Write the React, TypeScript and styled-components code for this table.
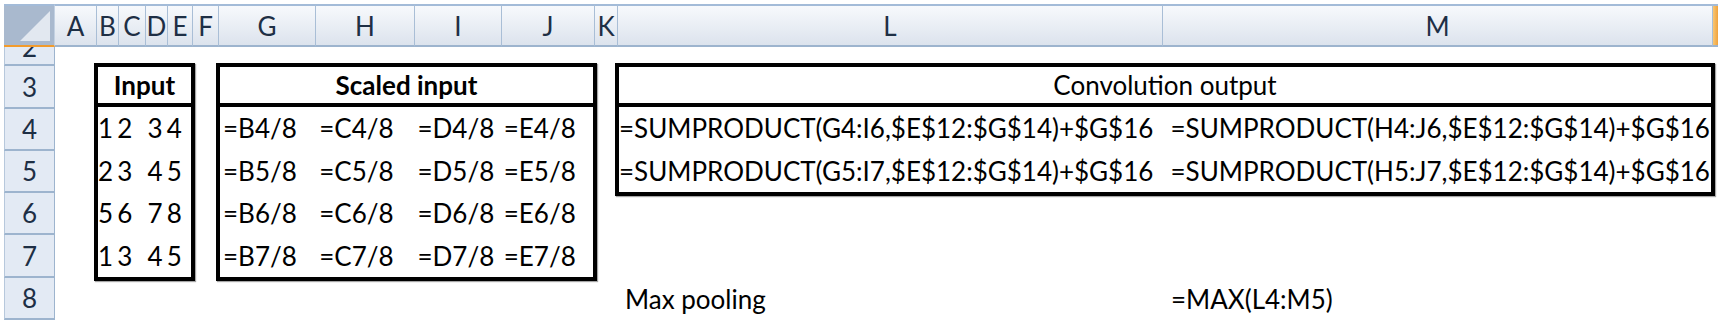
import styled, { createGlobalStyle } from 'styled-components';

const GlobalStyle = createGlobalStyle`
  body {
    margin: 0;
    background: #ffffff;
  }
`;

const COLUMNS = ['A', 'B', 'C', 'D', 'E', 'F', 'G', 'H', 'I', 'J', 'K', 'L', 'M'];
const ROWS = ['3', '4', '5', '6', '7', '8'];

const INPUT = [
  ['1', '2', '3', '4'],
  ['2', '3', '4', '5'],
  ['5', '6', '7', '8'],
  ['1', '3', '4', '5'],
];
// digits in the input box do not sit evenly in their cells
const INPUT_SHIFT = [0, -2, 2, 0];

const Sheet = styled.div`
  display: grid;
  grid-template-columns: 51px 42px 22px 27px 22px 25px 26px 97px 99px 87px 93px 23px 545px 550px 5px;
  grid-template-rows: 43px 19px 43px 42px 42px 42px 43px 42px 6px;
  padding: 4px 0 0 4px;
  font-family: Lato, 'Open Sans', sans-serif;
  font-size: 26px;
  color: #000;
`;

const Corner = styled.div`
  grid-column: 1;
  grid-row: 1;
  position: relative;
  background: #a9b9ce;
  border-top: 2px solid #a3bbd8;
  border-right: 1px solid #c3d1e2;
  border-bottom: 2px solid #f29b2c;
  svg {
    position: absolute;
    right: 4px;
    bottom: 4px;
  }
`;

const ColHead = styled.div<{ $col: number }>`
  grid-column: ${(p) => p.$col};
  grid-row: 1;
  display: flex;
  align-items: center;
  justify-content: center;
  background: linear-gradient(#f7f9fc, #dce3ed);
  border-top: 2px solid #a3bbd8;
  border-right: 1px solid #a9bed6;
  border-bottom: 2px solid #9db4ce;
  color: #1e2f45;
  font-size: 26px;
`;

const EdgeHead = styled.div`
  grid-column: 15;
  grid-row: 1;
  background: linear-gradient(90deg, #f8c775, #f0a23c);
  border-top: 2px solid #a3bbd8;
  border-bottom: 2px solid #9db4ce;
`;

const RowHead = styled.div<{ $row: number; $clip?: boolean }>`
  grid-column: 1;
  grid-row: ${(p) => p.$row};
  display: flex;
  align-items: ${(p) => (p.$clip ? 'flex-end' : 'center')};
  justify-content: center;
  overflow: hidden;
  background: #e3eaf4;
  border-left: 1px solid #b7c8dc;
  border-right: 1px solid #9db4ce;
  border-bottom: 2px solid #9db4ce;
  color: #1e2f45;
  span {
    line-height: ${(p) => (p.$clip ? '42px' : 'normal')};
    margin-bottom: ${(p) => (p.$clip ? '-4px' : '0')};
  }
`;

const Box = styled.div<{ $cols: string; $rows: string; $tracks: string; $body: number }>`
  grid-column: ${(p) => p.$cols};
  grid-row: ${(p) => p.$rows};
  margin: -3px -2px -3px -3px;
  display: grid;
  grid-template-columns: ${(p) => p.$tracks};
  grid-template-rows: 40px repeat(${(p) => p.$body}, 1fr);
  border: 4px solid #000;
  box-shadow: 1px 1px 1px rgba(0, 0, 0, 0.35);
`;

const BoxTitle = styled.div<{ $bold?: boolean }>`
  grid-column: 1 / -1;
  display: flex;
  align-items: center;
  justify-content: center;
  border-bottom: 4px solid #000;
  font-weight: ${(p) => (p.$bold ? 700 : 400)};
`;

const Cell = styled.div<{ $pad?: number }>`
  display: flex;
  align-items: center;
  margin-left: ${(p) => p.$pad ?? 3}px;
  white-space: nowrap;
`;

const Loose = styled.div<{ $col: number; $pad: number }>`
  grid-column: ${(p) => p.$col};
  grid-row: 8;
  display: flex;
  align-items: center;
  padding-left: ${(p) => p.$pad}px;
  white-space: nowrap;
`;

const App = () => (
  <>
    <GlobalStyle />
    <Sheet>
      <Corner>
        <svg width="30" height="30" viewBox="0 0 30 30">
          <polygon points="30,0 30,30 0,30" fill="#e2e8f0" />
        </svg>
      </Corner>
      {COLUMNS.map((c, i) => (
        <ColHead key={c} $col={i + 2}>{c}</ColHead>
      ))}
      <EdgeHead />

      <RowHead $row={2} $clip><span>2</span></RowHead>
      {ROWS.map((r, i) => (
        <RowHead key={r} $row={i + 3}><span>{r}</span></RowHead>
      ))}

      <Box $cols="3 / 7" $rows="3 / 8" $tracks="22fr 27fr 22fr 25fr" $body={4}>
        <BoxTitle $bold>Input</BoxTitle>
        {INPUT.map((row, i) => row.map((v, j) => (
          <Cell key={`${i}-${j}`} $pad={INPUT_SHIFT[j]}>{v}</Cell>
        )))}
      </Box>

      <Box $cols="8 / 12" $rows="3 / 8" $tracks="97fr 99fr 87fr 93fr" $body={4}>
        <BoxTitle $bold>Scaled input</BoxTitle>
        {[4, 5, 6, 7].map((r) => ['B', 'C', 'D', 'E'].map((c) => (
          <Cell key={`${c}${r}`} $pad={3}>={c}{r}/8</Cell>
        )))}
      </Box>

      <Box $cols="13 / 15" $rows="3 / 6" $tracks="545fr 550fr" $body={2}>
        <BoxTitle>Convolution output</BoxTitle>
        <Cell $pad={0}>=SUMPRODUCT(G4:I6,$E$12:$G$14)+$G$16</Cell>
        <Cell $pad={8}>=SUMPRODUCT(H4:J6,$E$12:$G$14)+$G$16</Cell>
        <Cell $pad={0}>=SUMPRODUCT(G5:I7,$E$12:$G$14)+$G$16</Cell>
        <Cell $pad={8}>=SUMPRODUCT(H5:J7,$E$12:$G$14)+$G$16</Cell>
      </Box>

      <Loose $col={13} $pad={7}>Max pooling</Loose>
      <Loose $col={14} $pad={8}>=MAX(L4:M5)</Loose>
    </Sheet>
  </>
);

export default App;
